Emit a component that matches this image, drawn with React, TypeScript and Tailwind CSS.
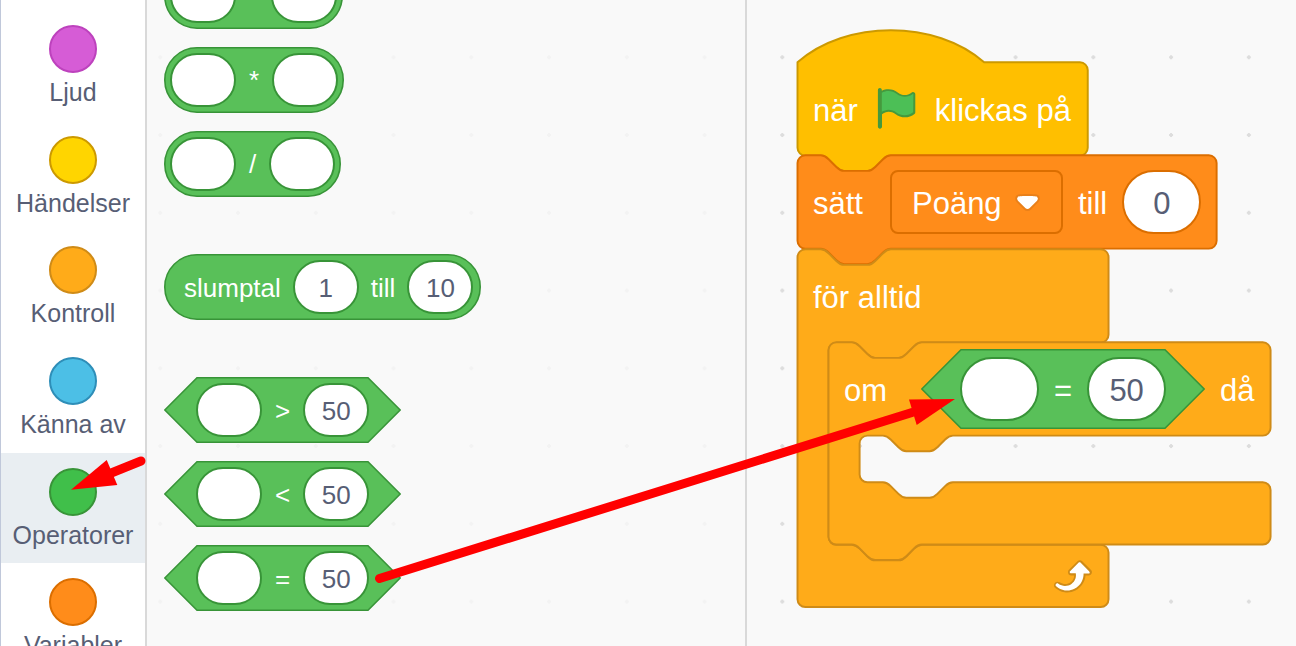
import React from "react";

const NOTCH_RIGHT = "c 2,0 3,1 4,2 l 4,4 c 1,1 2,2 4,2 h 12 c 2,0 3,-1 4,-2 l 4,-4 c 1,-1 2,-2 4,-2";
const NOTCH_LEFT = "c -2,0 -3,1 -4,2 l -4,4 c -1,1 -2,2 -4,2 h -12 c -2,0 -3,-1 -4,-2 l -4,-4 c -1,-1 -2,-2 -4,-2";
const TOP = `M 0,4 A 4,4 0 0 1 4,0 H 12 ${NOTCH_RIGHT}`;
const FLAT_BOTTOM = "H 4 a 4,4 0 0 1 -4,-4 z";
const BOTTOM = `H 48 ${NOTCH_LEFT} ${FLAT_BOTTOM}`;
const SCALE = 1.944;

const side = (w: number, h: number) => `H ${w - 4} a 4,4 0 0 1 4,4 v ${h - 8} a 4,4 0 0 1 -4,4`;
const hatPath = (w: number) => `M 0,0 c 25,-22 71,-22 96,0 ${side(w, 48)} ${BOTTOM}`;
const stackPath = (w: number) => `${TOP} ${side(w, 48)} ${BOTTOM}`;
const loopPath = (w: number, mouth: number, bottom: string) =>
  `${TOP} ${side(w, 48)} H 64 ${NOTCH_LEFT} h -8 a 4,4 0 0 0 -4,4 v ${mouth - 8} a 4,4 0 0 0 4,4 h 8 ${NOTCH_RIGHT} ${side(w, 32)} ${bottom}`;

function BlockShape({ d, fill, stroke }: { d: string; fill: string; stroke: string }) {
  return (
    <svg className="size-px overflow-visible [grid-area:1/1]" aria-hidden="true">
      <path d={d} fill={fill} stroke={stroke} transform={`translate(.5 .3) scale(${SCALE})`} />
    </svg>
  );
}

function ReporterShape({ w, h, hex }: { w: number; h: number; hex?: boolean }) {
  const a = 0.8;
  const r = h / 2;
  return (
    <svg width={w} height={h} className="[grid-area:1/1]" aria-hidden="true">
      {hex ? (
        <path
          d={`M ${a},${r} L ${r},${a} H ${w - r} L ${w - a},${r} L ${w - r},${h - a} H ${r} Z`}
          fill="#59c059"
          stroke="#389438"
          strokeWidth="1.6"
        />
      ) : (
        <rect x={a} y={a} width={w - 2 * a} height={h - 2 * a} rx={r - a} fill="#59c059" stroke="#389438" strokeWidth="1.6" />
      )}
    </svg>
  );
}

function Slot({ label, value = "" }: { label: string; value?: string }) {
  return (
    <input
      aria-label={label}
      defaultValue={value}
      className="h-[54px] w-[66px] rounded-full border-2 border-[#389438] bg-white pt-0.5 text-center text-[26px] text-[#575e75] outline-none"
    />
  );
}

function BigSlot({ label, value = "", border }: { label: string; value?: string; border: string }) {
  return (
    <input
      aria-label={label}
      defaultValue={value}
      className={`h-16 w-[79px] rounded-full border-2 bg-white pt-1 text-center text-[31px] text-[#575e75] outline-none ${border}`}
    />
  );
}

function Arithmetic({ sign, w }: { sign: string; w: number }) {
  return (
    <div className="grid h-[66px] w-fit">
      <ReporterShape w={w} h={66} />
      <div className="flex items-center gap-[13px] pl-1.5 [grid-area:1/1]">
        <Slot label={`${sign} a`} />
        <span>{sign}</span>
        <Slot label={`${sign} b`} />
      </div>
    </div>
  );
}

function Comparison({ sign }: { sign: string }) {
  return (
    <div className="grid h-[66px] w-fit">
      <ReporterShape w={237} h={66} hex />
      <div className="flex items-center gap-[13px] pl-8 [grid-area:1/1]">
        <Slot label={`${sign} a`} />
        <span className="pt-0.5">{sign}</span>
        <Slot label={`${sign} b`} value="50" />
      </div>
    </div>
  );
}

const categories = [
  { name: "Ljud", color: "border-[#bd42bd] bg-[#d65cd6]" },
  { name: "Händelser", color: "border-[#cc9900] bg-[#ffd500]" },
  { name: "Kontroll", color: "border-[#cf8b17] bg-[#ffab19]" },
  { name: "Känna av", color: "border-[#2e8eb8] bg-[#4cbfe6]" },
  { name: "Operatorer", color: "border-[#389438] bg-[#40bf4a]", selected: true },
  { name: "Variabler", color: "border-[#db6e00] bg-[#ff8c1a]" },
];

function Dots({ id, x, color }: { id: string; x: number; color: string }) {
  return (
    <svg className="absolute inset-0 size-full" aria-hidden="true">
      <defs>
        <pattern id={id} x={x - 10} y={47.3} width="77.76" height="77.76" patternUnits="userSpaceOnUse">
          <path d="M8 10H12M10 8V12" stroke={color} strokeWidth="2" />
        </pattern>
      </defs>
      <rect width="100%" height="100%" fill={`url(#${id})`} />
    </svg>
  );
}

function Flag() {
  return (
    <svg viewBox="0 0 24 24" className="size-[47px]" aria-label="grön flagga">
      <path
        fill="#45993d"
        d="M20.8,3.7c-0.4-0.2-0.9-0.1-1.2,0.2c-2,1.6-4.8,1.6-6.8,0c-2.3-1.9-5.6-2.3-8.3-1V2.5c0-0.6-0.5-1-1-1s-1,0.4-1,1v18.8c0,0.5,0.5,1,1,1h0.1c0.5,0,1-0.5,1-1v-6.4c1-0.7,2.1-1.2,3.4-1.3c1.2,0,2.4,0.4,3.4,1.2c2.9,2.3,7,2.3,9.8,0c0.3-0.2,0.4-0.5,0.4-0.9V4.7C21.6,4.2,21.3,3.8,20.8,3.7z"
      />
      <path
        fill="#4cbf56"
        d="M20.6,4.8l-0.1,9.1c-2.5,2-6.1,2-8.6,0.1c-1.1-0.9-2.5-1.4-4-1.4c-1.2,0.1-2.3,0.5-3.4,1.1V4C7,2.6,10,2.9,12.2,4.6c2.4,1.9,5.7,1.9,8.1,0c0.1,0,0.1,0,0.2,0C20.5,4.7,20.6,4.7,20.6,4.8z"
      />
    </svg>
  );
}

function LoopArrow() {
  return (
    <svg viewBox="0 0 24 24" className="size-[47px]" aria-hidden="true">
      <path
        fill="#cf8b17"
        d="M23.3,11c-0.3,0.6-0.9,1-1.5,1h-1.6c-0.1,1.3-0.5,2.5-1.1,3.6c-0.9,1.7-2.3,3.2-4.1,4.1c-1.7,0.9-3.6,1.2-5.5,0.9c-1.8-0.3-3.5-1.1-4.9-2.3c-0.7-0.7-0.7-1.9,0-2.6c0.6-0.6,1.6-0.7,2.3-0.2H7c0.9,0.6,1.9,0.9,2.9,0.9s1.9-0.3,2.7-0.9c1.1-0.8,1.8-2.1,1.8-3.5h-1.5c-0.9,0-1.7-0.7-1.7-1.7c0-0.4,0.2-0.9,0.5-1.2l4.4-4.4c0.7-0.6,1.7-0.6,2.4,0L23,9.2C23.5,9.7,23.6,10.4,23.3,11z"
      />
      <path
        fill="#fff"
        d="M21.8,11h-2.6c0,1.5-0.3,2.9-1,4.2c-0.8,1.6-2.1,2.8-3.7,3.6c-1.5,0.8-3.3,1.1-4.9,0.8c-1.6-0.2-3.2-1-4.4-2.1c-0.4-0.3-0.4-0.9-0.1-1.2c0.3-0.4,0.9-0.4,1.2-0.1l0,0c1,0.7,2.2,1.1,3.4,1.1s2.3-0.3,3.3-1c0.9-0.6,1.6-1.5,2-2.6c0.3-0.9,0.4-1.8,0.2-2.8h-2.4c-0.4,0-0.7-0.3-0.7-0.7c0-0.2,0.1-0.3,0.2-0.4l4.4-4.4c0.3-0.3,0.7-0.3,0.9,0L22,9.8c0.3,0.3,0.4,0.6,0.3,0.9S22,11,21.8,11z"
      />
    </svg>
  );
}

function VariableMenu() {
  return (
    <div className="ml-3 grid items-center">
      <select
        aria-label="Variabel"
        className="h-16 w-[173px] appearance-none rounded-lg border-2 border-[#db6e00] bg-[#ff8c1a] pt-1 pl-5 text-[31px] text-white outline-none [grid-area:1/1]"
      >
        <option>Poäng</option>
      </select>
      <svg viewBox="0 0 12.71 8.79" className="pointer-events-none mr-[23px] h-[17px] w-[25px] justify-self-end [grid-area:1/1]" aria-hidden="true">
        <path
          fill="#231f20"
          opacity=".1"
          d="M12.71,2.44A2.41,2.41,0,0,1,12,4.16L8.08,8.08a2.45,2.45,0,0,1-3.45,0L.72,4.16A2.42,2.42,0,0,1,0,2.44,2.48,2.48,0,0,1,.71.71C1,.47,1.43,0,6.36,0S11.75.46,12,.71A2.44,2.44,0,0,1,12.71,2.44Z"
        />
        <path
          fill="#fff"
          d="M6.36,7.79a1.43,1.43,0,0,1-1-.42L1.42,3.45a1.44,1.44,0,0,1,0-2c.56-.56,9.31-.56,9.87,0a1.44,1.44,0,0,1,0,2L7.37,7.37A1.43,1.43,0,0,1,6.36,7.79Z"
        />
      </svg>
    </div>
  );
}

function Text({ children }: { children: React.ReactNode }) {
  return <span className="pt-1 whitespace-nowrap">{children}</span>;
}

export default function App() {
  return (
    <div className="relative flex h-screen overflow-hidden bg-[#f9f9f9] font-['Liberation_Sans',Arial,sans-serif]">
      <nav className="w-[147px] shrink-0 border-r-2 border-l border-r-[#d9d9d9] border-l-[#c0c8da] bg-white pt-[10px]">
        <div className="grid h-[664px] grid-rows-6">
          {categories.map((c) => (
            <button
              key={c.name}
              type="button"
              className={`flex flex-col items-center gap-1 pt-[15px] text-[25px] leading-[30px] text-[#575e75] ${c.selected ? "bg-[#e9eef2]" : ""}`}
            >
              <span className={`size-12 shrink-0 rounded-full border-2 ${c.color}`} />
              <span className="whitespace-nowrap">{c.name}</span>
            </button>
          ))}
        </div>
      </nav>

      <section className="relative w-[600px] shrink-0 overflow-hidden border-r-2 border-[#d9d9d9]">
        <Dots id="palette-dots" x={13.3} color="#f3f3f3" />
        <div className="relative -mt-[37px] flex flex-col gap-[57px] pl-[17px] text-[26px] leading-[30px] text-white">
          <div className="flex flex-col gap-[18px]">
            <Arithmetic sign="-" w={179} />
            <Arithmetic sign="*" w={180} />
            <Arithmetic sign="/" w={177} />
          </div>
          <div className="grid h-[66px] w-fit">
            <ReporterShape w={317} h={66} />
            <div className="flex items-center gap-3 pl-5 [grid-area:1/1]">
              <span className="pt-0.5">slumptal</span>
              <Slot label="från" value="1" />
              <span className="pt-0.5">till</span>
              <Slot label="till" value="10" />
            </div>
          </div>
          <div className="flex flex-col gap-[18px]">
            <Comparison sign=">" />
            <Comparison sign="<" />
            <Comparison sign="=" />
          </div>
        </div>
      </section>

      <main className="relative min-w-0 flex-1 overflow-hidden">
        <Dots id="workspace-dots" x={35.3} color="#dddddd" />
        <div className="relative flex flex-col items-start pt-[62px] pl-[50px] text-[31px] leading-9 text-white">
          <div className="grid h-[93px]">
            <BlockShape d={hatPath(149.3)} fill="#ffbf00" stroke="#cc9900" />
            <div className="z-10 flex items-center gap-[15px] pl-4 [grid-area:1/1]">
              <Text>när</Text>
              <Flag />
              <Text>klickas på</Text>
            </div>
          </div>

          <div className="grid h-[94px]">
            <BlockShape d={stackPath(215.6)} fill="#ff8c1a" stroke="#db6e00" />
            <div className="z-10 flex items-center gap-[15px] pl-4 [grid-area:1/1]">
              <Text>sätt</Text>
              <VariableMenu />
              <Text>till</Text>
              <BigSlot label="värde" value="0" border="border-[#db6e00]" />
            </div>
          </div>

          <div className="grid">
            <BlockShape d={loopPath(160, 104, FLAT_BOTTOM)} fill="#ffab19" stroke="#cf8b17" />
            <div className="z-10 flex flex-col items-start [grid-area:1/1]">
              <div className="flex h-[93px] items-center pl-4">
                <Text>för alltid</Text>
              </div>
              <div className="ml-[31px] grid h-[202px]">
                <BlockShape d={loopPath(227.4, 24, BOTTOM)} fill="#ffab19" stroke="#cf8b17" />
                <div className="z-10 flex h-[94px] items-center gap-[15px] pl-4 [grid-area:1/1]">
                  <Text>om</Text>
                  <div className="ml-[19px] grid">
                    <ReporterShape w={284} h={80} hex />
                    <div className="flex items-center justify-center gap-[15px] [grid-area:1/1]">
                      <BigSlot label="= a" border="border-[#389438]" />
                      <Text>=</Text>
                      <BigSlot label="= b" value="50" border="border-[#389438]" />
                    </div>
                  </div>
                  <Text>då</Text>
                </div>
              </div>
              <div className="flex h-[62px] w-[311px] items-center justify-end pr-[15px]">
                <LoopArrow />
              </div>
            </div>
          </div>
        </div>
      </main>

      <svg className="pointer-events-none absolute inset-0 z-20 size-full" aria-hidden="true">
        <g stroke="#ff0000" strokeWidth="9" strokeLinecap="round">
          <path d="M141 461L110 473.5" />
          <path d="M379.5 578.5L912 412.5" />
        </g>
        <g fill="#ff0000">
          <path d="M71 489.7L106.7 460L117.3 485Z" />
          <path d="M955 399L909 399.5L916.7 425Z" />
        </g>
      </svg>
    </div>
  );
}
